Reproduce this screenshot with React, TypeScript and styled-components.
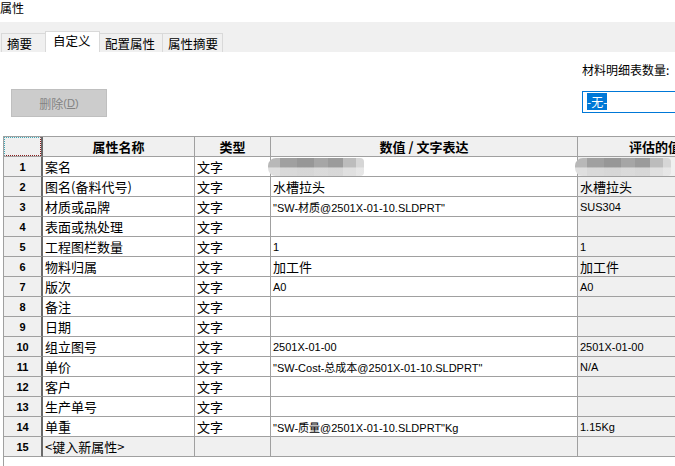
import React from 'react';
import styled, { createGlobalStyle, css } from 'styled-components';

const GlobalStyle = createGlobalStyle`
  html, body {
    margin: 0;
    padding: 0;
    background: #fff;
  }
  body {
    font-family: "Noto Sans CJK SC", "Liberation Sans", sans-serif;
    font-size: 12px;
    color: #000;
  }
`;

type Row = {
  name: string;
  value?: string;
  evaluated?: string;
  latin?: boolean;
  blurred?: boolean;
};

const ROWS: Row[] = [
  { name: '案名', blurred: true },
  { name: '图名(备料代号)', value: '水槽拉头', evaluated: '水槽拉头' },
  { name: '材质或品牌', value: '"SW-材质@2501X-01-10.SLDPRT"', evaluated: 'SUS304', latin: true },
  { name: '表面或热处理' },
  { name: '工程图栏数量', value: '1', evaluated: '1', latin: true },
  { name: '物料归属', value: '加工件', evaluated: '加工件' },
  { name: '版次', value: 'A0', evaluated: 'A0', latin: true },
  { name: '备注' },
  { name: '日期' },
  { name: '组立图号', value: '2501X-01-00', evaluated: '2501X-01-00', latin: true },
  { name: '单价', value: '"SW-Cost-总成本@2501X-01-10.SLDPRT"', evaluated: 'N/A', latin: true },
  { name: '客户' },
  { name: '生产单号' },
  { name: '单重', value: '"SW-质量@2501X-01-10.SLDPRT"Kg', evaluated: '1.15Kg', latin: true },
];

// widths measured off the dialog's tab row
const TABS = [
  { label: '摘要', width: 45 },
  { label: '自定义', width: 55 },
  { label: '配置属性', width: 64 },
  { label: '属性摘要', width: 61 },
];

function App() {
  return (
    <>
      <GlobalStyle />
      <Window>
        <TitleBar>属性</TitleBar>

        <TabStrip>
          {TABS.map((t) => (
            <Tab key={t.label} $width={t.width} $active={t.label === '自定义'}>
              {t.label}
            </Tab>
          ))}
        </TabStrip>

        <Body>
          <Toolbar>
            <DeleteButton>
              删除<Mnemonic>(<u>D</u>)</Mnemonic>
            </DeleteButton>
            <BomPanel>
              <BomLabel>材料明细表数量:</BomLabel>
              <BomInput>
                <Selected>-无-</Selected>
              </BomInput>
            </BomPanel>
          </Toolbar>

          <GridFrame>
            <Grid>
              <Corner />
              <HeadCell>属性名称</HeadCell>
              <HeadCell>类型</HeadCell>
              <HeadCell>数值 / 文字表达</HeadCell>
              <HeadCell>评估的值</HeadCell>

              {ROWS.map((r, i) => (
                <React.Fragment key={i}>
                  <RowHead>{i + 1}</RowHead>
                  <Cell>{r.name}</Cell>
                  <Cell>文字</Cell>
                  <Cell $latin={r.latin}>{r.blurred ? <Blur /> : r.value}</Cell>
                  <Cell $latin={r.latin} $gray>
                    {r.blurred ? <Blur /> : r.evaluated}
                  </Cell>
                </React.Fragment>
              ))}

              <RowHead>{ROWS.length + 1}</RowHead>
              <Cell $gray>&lt;键入新属性&gt;</Cell>
              <Cell $gray />
              <Cell $gray />
              <Cell $gray />
            </Grid>
          </GridFrame>
        </Body>
      </Window>
    </>
  );
}

export default App;

const Window = styled.div`
  display: flex;
  flex-direction: column;
  width: 675px;
  height: 466px;
  overflow: hidden;
  background: #fff;
`;

const TitleBar = styled.div`
  height: 22px;
  line-height: 16px;
  font-size: 12px;
`;

const TabStrip = styled.div`
  display: flex;
  align-items: flex-end;
  height: 30px;
  padding-left: 2px;
  background: #f0f0f0;
`;

const Tab = styled.div<{ $active?: boolean; $width: number }>`
  box-sizing: border-box;
  width: ${(p) => p.$width}px;
  height: 19px;
  padding: 2px 0 0 5px;
  margin-left: -1px;
  line-height: 16px;
  font-size: 12.5px;
  border: 1px solid #d9d9d9;
  border-bottom: none;
  background: #f0f0f0;
  white-space: nowrap;

  ${(p) =>
    p.$active &&
    css`
      height: 21px;
      padding: 1px 0 0 7px;
      background: #fff;
      position: relative;
      z-index: 1;
    `}
`;

const Body = styled.div`
  flex: 1;
  display: flex;
  flex-direction: column;
  min-height: 0;
`;

const Toolbar = styled.div`
  display: flex;
  justify-content: space-between;
  align-items: flex-start;
  height: 64px;
`;

const DeleteButton = styled.div`
  box-sizing: border-box;
  width: 96px;
  height: 28px;
  margin: 37px 0 0 11px;
  display: flex;
  align-items: center;
  justify-content: center;
  background: #cccccc;
  border: 1px solid #bfbfbf;
  color: #838383;
  font-size: 12px;
`;

const Mnemonic = styled.span`
  font-family: "Liberation Sans", sans-serif;
  font-size: 11px;
`;

const BomPanel = styled.div`
  width: 93px;
  display: flex;
  flex-direction: column;
  padding-top: 9px;
`;

const BomLabel = styled.div`
  line-height: 18px;
  font-size: 12px;
  white-space: nowrap;
`;

const BomInput = styled.div`
  box-sizing: border-box;
  width: 110px;
  height: 22px;
  margin-top: 12px;
  padding: 2px 0 0 4px;
  border: 1px solid #0078d7;
  background: #fff;
  line-height: 15px;
`;

const Selected = styled.span`
  background: #0078d7;
  color: #fff;
  font-size: 12px;
`;

const GridFrame = styled.div`
  flex: 1;
  margin: 20px 0 0 3px;
  border-left: 1px solid #a0a0a0;
  border-top: 1px solid #a0a0a0;
  overflow: hidden;
`;

const Grid = styled.div`
  display: grid;
  grid-template-columns: 39px 152px 76px 307px 155px;
  grid-auto-rows: 20px;
  width: max-content;
`;

const cellBase = css`
  box-sizing: border-box;
  display: flex;
  align-items: center;
  border-right: 1px solid #a0a0a0;
  border-bottom: 1px solid #a0a0a0;
  white-space: nowrap;
  overflow: visible;
`;

const Corner = styled.div`
  ${cellBase};
  position: relative;
  background: #f0f0f0;
  border-right: 2px solid #6a6a6a;

  &::after {
    content: '';
    position: absolute;
    inset: 0;
    border-top: 1px dotted #3fa9b8;
    border-left: 1px dotted #3fa9b8;
    border-right: 1px dotted #8a1c1c;
    border-bottom: 1px dotted #8a1c1c;
  }
`;

const HeadCell = styled.div`
  ${cellBase};
  justify-content: center;
  background: #f0f0f0;
  font-size: 13px;
  font-weight: 700;
  overflow: hidden;
`;

const RowHead = styled.div`
  ${cellBase};
  justify-content: center;
  background: #f0f0f0;
  border-right: 2px solid #6a6a6a;
  font-family: "Liberation Sans", sans-serif;
  font-size: 11px;
  font-weight: 700;
`;

const Cell = styled.div<{ $latin?: boolean; $gray?: boolean }>`
  ${cellBase};
  padding-left: 2px;
  font-size: 13px;
  background: ${(p) => (p.$gray ? '#f0f0f0' : '#fff')};

  ${(p) =>
    p.$latin &&
    css`
      font-family: "Liberation Sans", "Noto Sans CJK SC", sans-serif;
      font-size: 11px;
    `}
`;

const Blur = styled.div`
  flex: none;
  align-self: stretch;
  width: 96px;
  margin: 1px 0 0 -5px;
  border-radius: 8px 4px 4px 8px;
  background:
    linear-gradient(180deg, rgba(255, 255, 255, 0) 50%, rgba(236, 236, 236, 0.75) 55%),
    linear-gradient(90deg, #b8b8b8 0 12%, #a0a0a0 12% 30%, #979797 30% 48%, #a6a6a6 48% 62%, #9b9b9b 62% 78%, #bcbcbc 78% 92%, #d6d6d6 92%);
`;
